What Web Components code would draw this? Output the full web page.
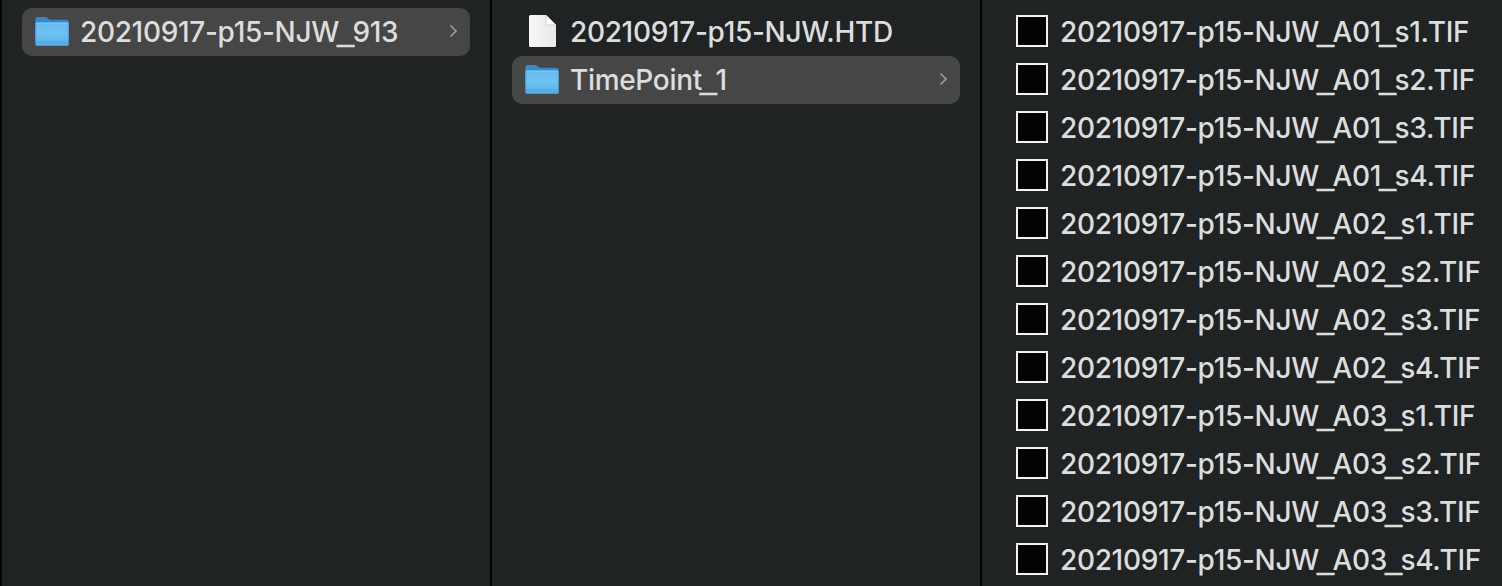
<!DOCTYPE html>
<html><head><meta charset="utf-8"><style>
html,body{margin:0;height:100%;overflow:hidden;background:#1f2324}
finder-columns{font-family:Inter,"Liberation Sans",sans-serif}
</style></head><body>
<finder-columns></finder-columns>
<script>
const FOLDER=`<svg width="36" height="34" viewBox="0 0 36 34"><defs><linearGradient id="g" x1="0" y1="0" x2="0" y2="1"><stop offset="0" stop-color="#67baee"/><stop offset=".45" stop-color="#6fc3f3"/><stop offset="1" stop-color="#55aae3"/></linearGradient></defs><path d="M1.500 29Q1.500 31.800 4 31.800H32.300Q34.800 31.800 34.800 29Z" fill="#2c4a60" opacity=".6"/><path d="M1.300 4.500Q1.300 2 3.800 2H10.800Q12.300 2 13.300 2.900L14.700 4.100Q15.600 4.800 16.800 4.800H32.200Q34.800 4.800 34.800 7.400V20H1.300Z" fill="#3a86cb"/><path d="M1.300 9.200Q1.300 7.200 3.300 7.200H32.800Q34.800 7.200 34.800 9.200V28.500Q34.800 31 32.300 31H3.800Q1.300 31 1.300 28.500Z" fill="url(#g)"/><path d="M2.300 8.300H33.800" stroke="#7accf7" stroke-width=".8"/><path d="M1.800 27.200H34.300" stroke="#489bd8" stroke-width=".5"/><path d="M1.800 9V28.500Q1.800 30.500 3.800 30.500H32.300Q34.300 30.500 34.300 28.500V9" fill="none" stroke="#469ad8" stroke-width=".9"/></svg>`;
const DOC=`<svg width="36" height="34" viewBox="0 0 36 34"><defs><linearGradient id="p" x1="1" y1="0" x2="0" y2="0"><stop offset="0" stop-color="#e9e9e9"/><stop offset="1" stop-color="#f7f7f7"/></linearGradient></defs><path d="M5 1.500Q5 0 6.500 0H22L32 10V30.500Q32 32 30.500 32H6.500Q5 32 5 30.500Z" fill="url(#p)"/><path d="M22 0V8.500Q22 10 23.500 10H32Z" fill="#fff" stroke="#c5c5c5" stroke-width=".8"/></svg>`;
const TIF=`<svg width="36" height="34" viewBox="0 0 36 34"><rect x="3" y="1" width="30" height="30" fill="#030303" stroke="#f4f4f4" stroke-width="2"/></svg>`;
class FinderRow extends HTMLElement{
 connectedCallback(){
  const k=this.getAttribute('kind'),sel=this.hasAttribute('selected');
  const label=this.getAttribute('label').replaceAll('_','<span class="u">_</span>');
  this.attachShadow({mode:'open'}).innerHTML=`<style>
:host{display:flex;align-items:center;height:48px;box-sizing:border-box;padding:0 10px 0 12px;border-radius:10px;color:#dddddd;font-size:28px;font-weight:500;letter-spacing:-.32px;white-space:nowrap}
:host([selected]){background:#464646}
.i{width:36px;height:34px;flex:none;margin-right:10px}.i svg,.c{display:block}
.l{flex:1;line-height:48px;height:48px}.u{font-family:"Liberation Sans",sans-serif;font-size:30px;line-height:0;letter-spacing:0;margin:0 -1.4px 0 -1.8px;vertical-align:1px;-webkit-text-stroke:.6px currentColor}.c{flex:none}</style><span class="i">${k==='folder'?FOLDER:k==='doc'?DOC:TIF}</span><span class="l">${label}</span>${sel?'<svg class="c" width="14" height="16" viewBox="0 0 14 16"><path d="M4.500 1.500L10 7L4.500 12.500" fill="none" stroke="#9b9b9b" stroke-width="1.700"/></svg>':''}`;
 }}
class FinderColumn extends HTMLElement{
 connectedCallback(){this.attachShadow({mode:'open'}).innerHTML='<style>:host{display:block;box-sizing:border-box;width:490px;flex:none;border-left:2px solid #030404;padding:8px 20px}:host(:last-child){width:auto;flex:1}</style><slot></slot>';}}
class FinderColumns extends HTMLElement{
 connectedCallback(){
  let t='';for(const a of ['A01','A02','A03'])for(let s=1;s<5;s++)t+=`<finder-row kind="tif" label="20210917-p15-NJW_${a}_s${s}.TIF"></finder-row>`;
  this.attachShadow({mode:'open'}).innerHTML=`<style>:host{display:flex;width:1502px;height:586px;overflow:hidden}</style>
<finder-column><finder-row kind="folder" selected label="20210917-p15-NJW_913"></finder-row></finder-column>
<finder-column><finder-row kind="doc" label="20210917-p15-NJW.HTD"></finder-row><finder-row kind="folder" selected label="TimePoint_1"></finder-row></finder-column>
<finder-column>${t}</finder-column>`;}}
customElements.define('finder-row',FinderRow);customElements.define('finder-column',FinderColumn);customElements.define('finder-columns',FinderColumns);
</script></body></html>
